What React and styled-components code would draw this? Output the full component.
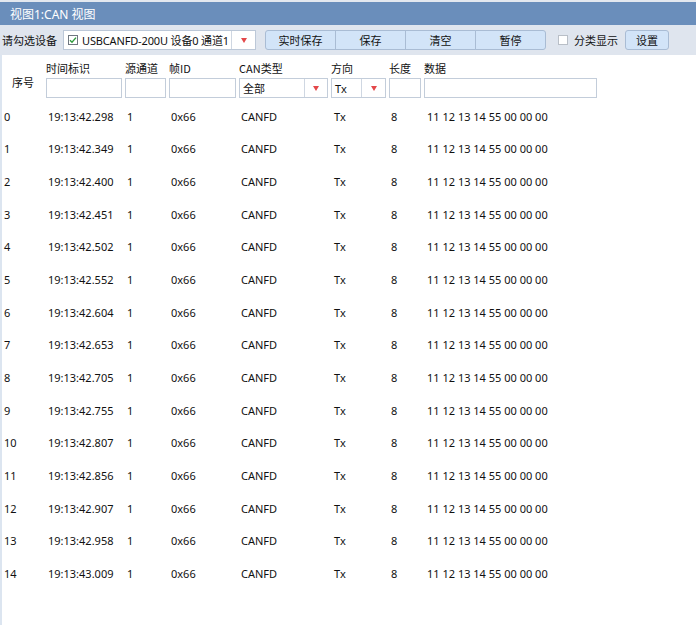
import React from "react";
import styled, { createGlobalStyle } from "styled-components";

const Global = createGlobalStyle`
  html, body { margin: 0; padding: 0; background: #ffffff; }
  body { font-family: "Noto Sans", "Noto Sans CJK SC", sans-serif; font-size: 11px; color: #111; }
  * { box-sizing: border-box; }
`;

const Window = styled.div`
  width: 696px;
  height: 625px;
  display: flex;
  flex-direction: column;
  padding-top: 2px;
  background: linear-gradient(#e3e8ef 0 2px, #ffffff 2px);
  overflow: hidden;
`;

const TitleBar = styled.div`
  height: 23px;
  background: #6a8ebb;
  color: #ffffff;
  display: flex;
  align-items: center;
  padding-left: 10px;
  font-size: 12px;
`;

const Toolbar = styled.div`
  height: 30px;
  background: #dfe5ee;
  display: flex;
  align-items: center;
  padding-left: 2px;
`;

const Label = styled.span`
  font-family: "Noto Sans CJK SC", sans-serif;
  font-size: 11px;
  white-space: nowrap;
`;

const Combo = styled.div`
  margin-left: 6px;
  width: 193px;
  height: 20px;
  background: #ffffff;
  border: 1px solid #bcc8d8;
  display: flex;
  align-items: center;
`;

const ComboText = styled.div`
  flex: 1;
  display: flex;
  align-items: center;
  gap: 4px;
  padding-left: 4px;
  white-space: nowrap;
  overflow: visible;
  font-family: "Noto Sans", "Noto Sans CJK SC", sans-serif;
  font-size: 11px;
  letter-spacing: -0.15px;
`;

const Check = styled.span`
  width: 10px;
  height: 10px;
  border: 1px solid ${(p) => (p.$checked ? "#6f7780" : "#b9bfc7")};
  background: #fff;
  display: inline-flex;
  align-items: center;
  justify-content: center;
  flex: none;
`;

const Arrow = styled.div`
  width: ${(p) => p.$w || 24}px;
  flex: none;
  align-self: stretch;
  border-left: 1px solid #cfd7e2;
  display: flex;
  align-items: center;
  justify-content: center;
  background: #fff;
  &::after {
    content: "";
    border-left: 3.5px solid transparent;
    border-right: 3.5px solid transparent;
    border-top: 5px solid #e4484a;
  }
`;

const ButtonGroup = styled.div`
  display: flex;
  margin-left: 9px;
`;

const Btn = styled.div`
  width: ${(p) => p.$w}px;
  height: 20px;
  background: #d2e4f8;
  border: 1px solid #a9bcd4;
  border-radius: ${(p) => p.$r || "0"};
  margin-left: ${(p) => p.$ml || 0}px;
  display: flex;
  align-items: center;
  justify-content: center;
  font-family: "Noto Sans CJK SC", sans-serif;
  font-size: 11px;
  color: #111;
`;

const ToggleWrap = styled.div`
  display: flex;
  align-items: center;
  gap: 6px;
  margin-left: 12px;
`;

const Body = styled.div`
  flex: 1;
  border-left: 2px solid #dce5f0;
  display: flex;
  flex-direction: column;
`;

const Grid = styled.div`
  display: grid;
  grid-template-columns: 41px 76px 41px 67px 89px 55px 32px 173px;
  column-gap: 3px;
`;

const Header = styled(Grid)`
  padding-top: 2px;
  height: 44px;
  grid-template-rows: 21px 20px;
`;

const HLabel = styled.div`
  font-family: "Noto Sans CJK SC", sans-serif;
  font-size: 11px;
  display: flex;
  align-items: center;
  white-space: nowrap;
`;

const SeqLabel = styled(HLabel)`
  grid-row: 1 / span 2;
  padding-left: 10px;
  padding-top: 8px;
`;

const Input = styled.div`
  height: 20px;
  border: 1px solid #c3cdda;
  background: #fff;
  display: flex;
  align-items: center;
`;

const SelectText = styled.div`
  flex: 1;
  padding-left: 3px;
  font-family: "Noto Sans", "Noto Sans CJK SC", sans-serif;
  font-size: 11px;
`;

const Rows = styled.div`
  padding-top: 1px;
`;

const Row = styled(Grid)`
  height: 32.65px;
  align-items: center;
`;

const Cell = styled.div`
  padding-left: ${(p) => p.$pl ?? 2}px;
  white-space: nowrap;
  font-family: "Noto Sans", sans-serif;
  font-size: 11px;
  color: #111;
`;

const times = [
  "19:13:42.298", "19:13:42.349", "19:13:42.400", "19:13:42.451", "19:13:42.502",
  "19:13:42.552", "19:13:42.604", "19:13:42.653", "19:13:42.705", "19:13:42.755",
  "19:13:42.807", "19:13:42.856", "19:13:42.907", "19:13:42.958", "19:13:43.009",
];

const CheckMark = () => (
  <svg width="8" height="8" viewBox="0 0 8 8">
    <path d="M1 4.2 L3 6.2 L7 1.6" fill="none" stroke="#2e9a3c" strokeWidth="1.4" />
  </svg>
);

export default function App() {
  return (
    <>
      <Global />
      <Window>
        <TitleBar>视图1:CAN 视图</TitleBar>
        <Toolbar>
          <Label>请勾选设备</Label>
          <Combo>
            <ComboText>
              <Check $checked><CheckMark /></Check>
              <span>USBCANFD-200U 设备0 通道1</span>
            </ComboText>
            <Arrow $w={24} />
          </Combo>
          <ButtonGroup>
            <Btn $w={71} $r="3px 0 0 3px">实时保存</Btn>
            <Btn $w={71} $ml={-1}>保存</Btn>
            <Btn $w={71} $ml={-1}>清空</Btn>
            <Btn $w={71} $ml={-1} $r="0 3px 3px 0">暂停</Btn>
          </ButtonGroup>
          <ToggleWrap>
            <Check />
            <Label>分类显示</Label>
          </ToggleWrap>
          <Btn $w={44} $ml={7} $r="3px">设置</Btn>
        </Toolbar>
        <Body>
          <Header>
            <SeqLabel>序号</SeqLabel>
            <HLabel>时间标识</HLabel>
            <HLabel>源通道</HLabel>
            <HLabel>帧ID</HLabel>
            <HLabel>CAN类型</HLabel>
            <HLabel>方向</HLabel>
            <HLabel>长度</HLabel>
            <HLabel>数据</HLabel>
            <Input />
            <Input />
            <Input />
            <Input>
              <SelectText>全部</SelectText>
              <Arrow $w={23} />
            </Input>
            <Input>
              <SelectText>Tx</SelectText>
              <Arrow $w={24} />
            </Input>
            <Input />
            <Input />
          </Header>
          <Rows>
            {times.map((t, i) => (
              <Row key={i}>
                <Cell>{i}</Cell>
                <Cell>{t}</Cell>
                <Cell>1</Cell>
                <Cell>0x66</Cell>
                <Cell>CANFD</Cell>
                <Cell $pl={3}>Tx</Cell>
                <Cell>8</Cell>
                <Cell $pl={3}>11 12 13 14 55 00 00 00</Cell>
              </Row>
            ))}
          </Rows>
        </Body>
      </Window>
    </>
  );
}
